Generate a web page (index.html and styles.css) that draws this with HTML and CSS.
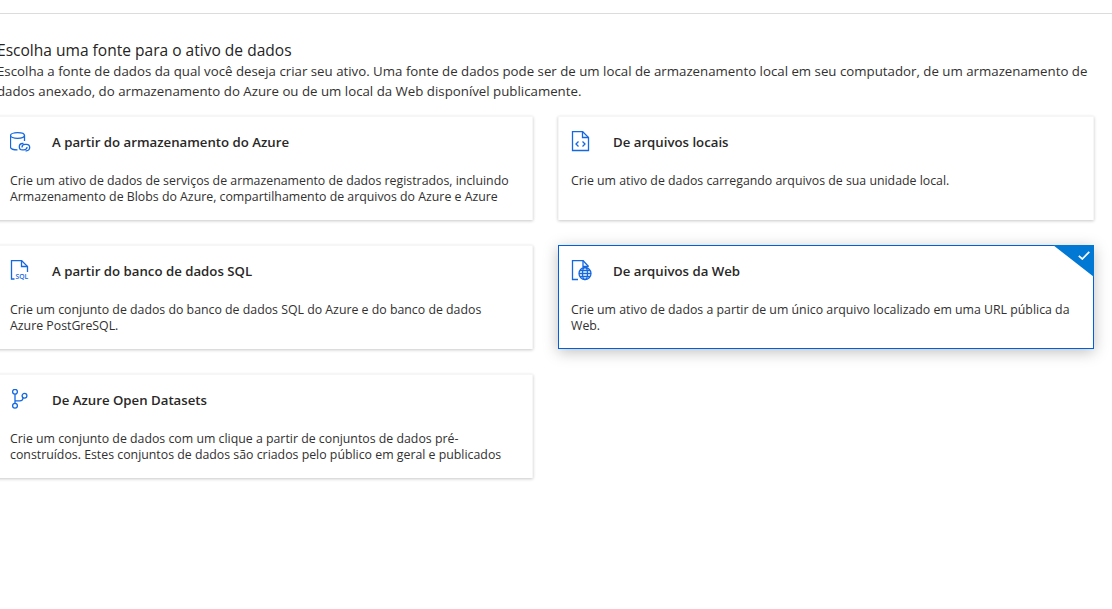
FILE: index.html
```html
<!DOCTYPE html>
<html lang="pt">
<head>
<meta charset="utf-8">
<title>Fonte de dados</title>
<link rel="stylesheet" href="styles.css">
</head>
<body>
<div class="topline"></div>
<main class="content">
  <h2 class="title">Escolha uma fonte para o ativo de dados</h2>
  <p class="lead">Escolha a fonte de dados da qual você deseja criar seu ativo. Uma fonte de dados pode ser de um local de armazenamento local em seu computador, de um armazenamento de<br>dados anexado, do armazenamento do Azure ou de um local da Web disponível publicamente.</p>
  <div class="cards">
    <section class="card">
      <header class="card-head">
        <svg class="icon" viewBox="0 0 22 22" fill="none"><ellipse cx="7.500" cy="4.500" rx="7" ry="2.800"/><path d="M.5 4.500V16C.5 17.500 3 18.800 7.500 18.800M14.500 4.500V10"/><path d="M13.500 12.500H12.500a3.200 3.200 0 0 0 0 6.400h1.500a3 3 0 0 0 3-3"/><path d="M15.500 19.800H16.500a3.200 3.200 0 0 0 0-6.400H15a3 3 0 0 0-3 3"/></svg>
        <h3 class="card-title">A partir do armazenamento do Azure</h3>
      </header>
      <p class="card-text">Crie um ativo de dados de serviços de armazenamento de dados registrados, incluindo<br>Armazenamento de Blobs do Azure, compartilhamento de arquivos do Azure e Azure</p>
    </section>
    <section class="card">
      <header class="card-head">
        <svg class="icon" viewBox="0 0 22 22" fill="none"><path d="M1.500 .5H11.500L17.500 6.500V19.500H1.500Z"/><path d="M11.500 .5V6.500H17.500"/><path d="M7.500 10.500L5 13L7.500 15.500M11.500 10.500L14 13L11.500 15.500"/></svg>
        <h3 class="card-title">De arquivos locais</h3>
      </header>
      <p class="card-text">Crie um ativo de dados carregando arquivos de sua unidade local.</p>
    </section>
    <section class="card">
      <header class="card-head">
        <svg class="icon" viewBox="0 0 22 22" fill="none"><path d="M4.500 19H1.500V.5H11.500L17.500 6.500V12"/><path d="M11.500 .5V6.500H17.500"/><text class="sql" x="5.500" y="19">SQL</text></svg>
        <h3 class="card-title">A partir do banco de dados SQL</h3>
      </header>
      <p class="card-text">Crie um conjunto de dados do banco de dados SQL do Azure e do banco de dados<br>Azure PostGreSQL.</p>
    </section>
    <section class="card card-selected">
      <span class="corner"></span>
      <svg class="check" viewBox="0 0 12 9" fill="none"><path d="M.8 4.800L4.300 8L11.300 .8"/></svg>
      <header class="card-head">
        <svg class="icon" viewBox="0 0 22 22" fill="none"><path d="M7 19.500H1.500V.5H12L17.500 6.500"/><path d="M12 .5V6.500H17.500"/><circle cx="14" cy="13.500" r="6"/><ellipse cx="14" cy="13.500" rx="2.500" ry="6"/><path d="M8 13.500H20M9 10.500H19M9 16.500H19"/></svg>
        <h3 class="card-title">De arquivos da Web</h3>
      </header>
      <p class="card-text">Crie um ativo de dados a partir de um único arquivo localizado em uma URL pública da<br>Web.</p>
    </section>
    <section class="card">
      <header class="card-head">
        <svg class="icon" viewBox="0 0 22 22" fill="none"><circle cx="5" cy="2.800" r="2.400"/><circle cx="5" cy="16.800" r="2.400"/><circle cx="14.500" cy="6.800" r="2.400"/><path d="M5 5.200V14.400M5 11.800H10C12 11.800 12.800 10.500 13.200 8.800"/></svg>
        <h3 class="card-title">De Azure Open Datasets</h3>
      </header>
      <p class="card-text">Crie um conjunto de dados com um clique a partir de conjuntos de dados pré-<br>construídos. Estes conjuntos de dados são criados pelo público em geral e publicados</p>
    </section>
  </div>
</main>
</body>
</html>
```
FILE: styles.css
```css
html, body { margin: 0; padding: 0; background: #fff; overflow: hidden; height: 100%; }
body { font-family: "Open Sans", "Noto Sans", sans-serif; color: #323130; }
.topline { height: 13px; border-bottom: 1px solid #dcdcdc; }
.content { margin-left: -3px; padding-top: 26px; width: 1100px; }
.title { margin: 0 0 1px; font-size: 15.550px; line-height: 20px; font-weight: 500; white-space: nowrap; color: #252423; }
.lead { margin: 0; font-size: 13.280px; line-height: 20px; white-space: nowrap; }
.cards { display: grid; grid-template-columns: 536px 536px; grid-auto-rows: 104px; gap: 25px; margin-top: 15px; }
.card { position: relative; box-sizing: border-box; background: #fff; border: 1px solid #f6f6f6; border-bottom: 0; padding: 0 12px; box-shadow: 0 1px 3px rgba(0,0,0,.22); }
.card-head { display: flex; align-items: center; height: 50px; }
.icon { width: 22px; height: 22px; margin-right: 20px; stroke: #1468e0; stroke-width: 1.300; flex: none; }
.sql { font-family: "Open Sans", sans-serif; font-size: 6.800px; fill: #1468e0; stroke: none; font-weight: 600; }
.card-title { margin: 0; font-size: 13.220px; line-height: 18px; font-weight: 600; white-space: nowrap; color: #292827; }
.card-text { margin: 6px 0 0; font-size: 12.330px; line-height: 16px; white-space: nowrap; }
.card-selected { border: 1px solid #0060e0; box-shadow: 0 3px 14px rgba(0,0,0,.25); }
.corner { position: absolute; top: -1px; right: -1px; width: 0; height: 0; border-style: solid; border-width: 0 41px 32px 0; border-color: transparent #0078d4 transparent transparent; }
.check { position: absolute; top: 5px; right: 3px; width: 12px; height: 9px; stroke: #fff; stroke-width: 1.700; }
```
